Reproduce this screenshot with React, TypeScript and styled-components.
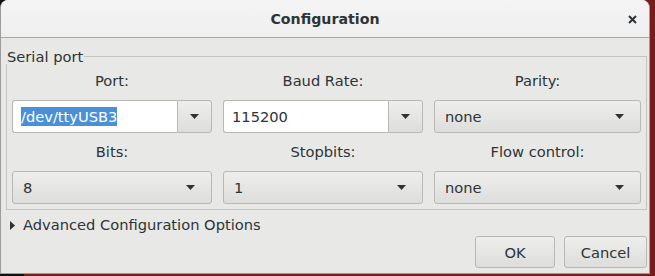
import { FC } from 'react'
import styled, { createGlobalStyle } from 'styled-components'

const GlobalStyle = createGlobalStyle`
  html, body {
    margin: 0;
    padding: 0;
  }
  body {
    width: 655px;
    height: 276px;
    overflow: hidden;
    background: linear-gradient(90deg, #111 0, #111 24px, #771b1b 24px);
    font-family: 'DejaVu Sans', 'Liberation Sans', sans-serif;
    font-size: 14.67px;
    color: #2e3436;
  }
`

const Window = styled.div`
  box-sizing: border-box;
  width: 650px;
  height: 274px;
  display: flex;
  flex-direction: column;
  background: #e8e8e7;
  border: 1px solid #9c9c9a;
  border-top: none;
  border-radius: 8px 8px 0 0;
  overflow: hidden;
`

const TitleBar = styled.div`
  height: 37px;
  flex: none;
  display: grid;
  grid-template-columns: 1fr auto 1fr;
  align-items: center;
  background: linear-gradient(#f4f4f4, #efefef);
  border-bottom: 1px solid #a8a8a6;
`

const Title = styled.div`
  grid-column: 2;
  font-weight: bold;
  font-size: 14.2px;
  padding-top: 1px;
`

const CloseButton = styled.div`
  justify-self: end;
  width: 24px;
  height: 24px;
  margin-right: 5px;
  display: grid;
  place-items: center;
  padding-top: 1px;
`

const Content = styled.div`
  flex: 1;
  display: flex;
  flex-direction: column;
  padding: 11px 2px 4px 5px;
`

const FrameHead = styled.div`
  display: flex;
  height: 15px;
`

const FrameLabel = styled.span`
  line-height: 15px;
  padding-left: 1px;
  padding-right: 1px;
`

const FrameLine = styled.div`
  flex: 1;
  align-self: flex-end;
  height: 7px;
  border-top: 1px solid #c4c4c1;
  border-right: 1px solid #c4c4c1;
`

const FrameBody = styled.div`
  display: grid;
  grid-template-columns: 200px 200px 1fr;
  column-gap: 11px;
  row-gap: 10px;
  padding: 8px 5px 5px 5px;
  border: 1px solid #c4c4c1;
  border-top: none;
`

const Field = styled.div`
  display: flex;
  flex-direction: column;
  gap: 10px;
`

const FieldLabel = styled.div`
  text-align: center;
  line-height: 18px;
`

const ComboShell = styled.div`
  display: flex;
  height: 33px;
  box-sizing: border-box;
`

const EntryPart = styled.div`
  flex: 1;
  display: flex;
  align-items: center;
  padding-left: 8px;
  background: #fff;
  border: 1px solid #b8b8b5;
  border-right: none;
  border-radius: 3px 0 0 3px;
`

const Selected = styled.span`
  background: #4a90d9;
  color: #fff;
  line-height: 19px;
`

const ArrowButton = styled.div`
  width: 33px;
  display: grid;
  place-items: center;
  background: linear-gradient(#eeeeed, #dddddb);
  border: 1px solid #b8b8b5;
  border-radius: 0 3px 3px 0;
`

const Combo = styled.div`
  height: 33px;
  box-sizing: border-box;
  display: flex;
  align-items: center;
  justify-content: space-between;
  padding: 0 16px 0 10px;
  background: linear-gradient(#eeeeed, #dddddb);
  border: 1px solid #b8b8b5;
  border-radius: 3px;
`

const Expander = styled.div`
  display: flex;
  align-items: center;
  gap: 8px;
  padding-left: 4px;
  margin-top: 6px;
  line-height: 18px;
`

const ButtonRow = styled.div`
  display: flex;
  justify-content: flex-end;
  gap: 9px;
  margin-top: 2px;
`

const Button = styled.div<{ $width: number }>`
  width: ${(p) => p.$width}px;
  height: 32px;
  box-sizing: border-box;
  display: grid;
  place-items: center;
  background: linear-gradient(#eeeeed, #dddddb);
  border: 1px solid #b8b8b5;
  border-radius: 3px;
`

const Arrow: FC = () => (
  <svg width="9" height="5" viewBox="0 0 9 5">
    <path d="M0 0 L9 0 L4.5 5 Z" fill="#2e3436" />
  </svg>
)

const EntryCombo: FC<{ value: string; selected?: boolean }> = ({ value, selected }) => (
  <ComboShell>
    <EntryPart>{selected ? <Selected>{value}</Selected> : <span>{value}</span>}</EntryPart>
    <ArrowButton>
      <Arrow />
    </ArrowButton>
  </ComboShell>
)

const SelectCombo: FC<{ value: string }> = ({ value }) => (
  <Combo>
    <span>{value}</span>
    <Arrow />
  </Combo>
)

const App: FC = () => {
  return (
    <>
      <GlobalStyle />
      <Window>
        <TitleBar>
          <Title>Configuration</Title>
          <CloseButton>
            <svg width="9" height="9" viewBox="0 0 9 9">
              <path d="M1 1 L8 8 M8 1 L1 8" stroke="#2e3436" strokeWidth="2" />
            </svg>
          </CloseButton>
        </TitleBar>
        <Content>
          <FrameHead>
            <FrameLabel>Serial port</FrameLabel>
            <FrameLine />
          </FrameHead>
          <FrameBody>
            <Field>
              <FieldLabel>Port:</FieldLabel>
              <EntryCombo value="/dev/ttyUSB3" selected />
            </Field>
            <Field>
              <FieldLabel>Baud Rate:</FieldLabel>
              <EntryCombo value="115200" />
            </Field>
            <Field>
              <FieldLabel>Parity:</FieldLabel>
              <SelectCombo value="none" />
            </Field>
            <Field>
              <FieldLabel>Bits:</FieldLabel>
              <SelectCombo value="8" />
            </Field>
            <Field>
              <FieldLabel>Stopbits:</FieldLabel>
              <SelectCombo value="1" />
            </Field>
            <Field>
              <FieldLabel>Flow control:</FieldLabel>
              <SelectCombo value="none" />
            </Field>
          </FrameBody>
          <Expander>
            <svg width="5" height="9" viewBox="0 0 5 9">
              <path d="M0 0 L5 4.5 L0 9 Z" fill="#2e3436" />
            </svg>
            <span>Advanced Configuration Options</span>
          </Expander>
          <ButtonRow>
            <Button $width={80}>OK</Button>
            <Button $width={83}>Cancel</Button>
          </ButtonRow>
        </Content>
      </Window>
    </>
  )
}

export default App
